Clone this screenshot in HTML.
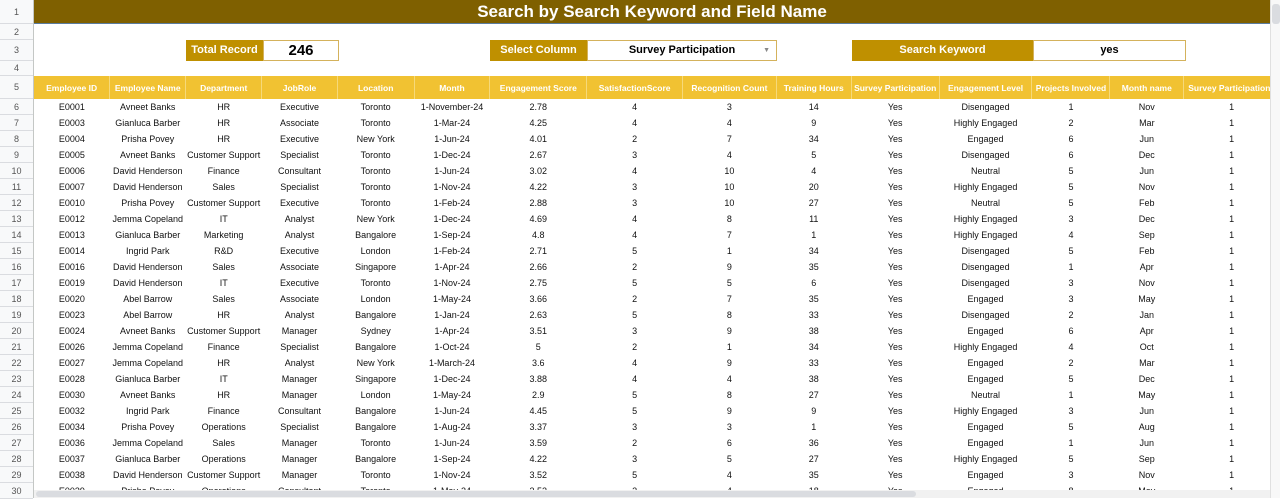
<!DOCTYPE html>
<html><head><meta charset="utf-8"><style>
body{margin:0;width:1280px;height:498px;overflow:hidden;background:#fff;font-family:"Liberation Sans",Arial,sans-serif;position:relative}
.rh{position:absolute;left:0;width:33px;border-right:1px solid #c4c7c5;background:#f8f9fa;color:#555;font-size:9px;text-align:center}
.rh div{border-bottom:1px solid #dadce0;box-sizing:border-box}
#title{position:absolute;left:34px;top:0;width:1236px;height:23px;background:#7f6000;border-bottom:1px solid #5a7ca0;color:#fff;font-weight:bold;font-size:17px;text-align:center;line-height:24px}
.lab{position:absolute;top:40px;height:21px;background:#bf9000;color:#fff;font-weight:bold;font-size:11px;text-align:center;line-height:21px}
.val{position:absolute;top:40px;height:19px;border:1px solid #d4b25c;background:#fff;color:#000;font-weight:bold;text-align:center;line-height:19px;box-sizing:content-box}
table{position:absolute;left:34px;top:76px;border-collapse:collapse;table-layout:fixed;font-size:9px}
td{height:16px;padding:0;text-align:center;white-space:nowrap;overflow:hidden;color:#111}
tr.h td{height:23px;background:#f1c232;color:#fff;font-weight:bold;font-size:8.5px;border-right:1px solid #f6d97a}
#sb{position:absolute;left:34px;top:490px;width:1236px;height:8px;background:#f1f1f1}
#sbt{position:absolute;left:36px;top:491px;width:880px;height:6px;background:#dadce0;border-radius:3px}
#vs{position:absolute;left:1270px;top:0;width:10px;height:498px;background:#f8f8f8;border-left:1px solid #e0e0e0}
</style></head><body>
<div class="rh" style="top:0;height:498px">
<div style="height:24px;line-height:24px">1</div><div style="height:16px;line-height:16px">2</div><div style="height:21px;line-height:21px">3</div><div style="height:15px;line-height:15px">4</div><div style="height:23px;line-height:23px">5</div>
<div style="height:16px;line-height:16px">6</div><div style="height:16px;line-height:16px">7</div><div style="height:16px;line-height:16px">8</div><div style="height:16px;line-height:16px">9</div><div style="height:16px;line-height:16px">10</div><div style="height:16px;line-height:16px">11</div><div style="height:16px;line-height:16px">12</div><div style="height:16px;line-height:16px">13</div><div style="height:16px;line-height:16px">14</div><div style="height:16px;line-height:16px">15</div><div style="height:16px;line-height:16px">16</div><div style="height:16px;line-height:16px">17</div><div style="height:16px;line-height:16px">18</div><div style="height:16px;line-height:16px">19</div><div style="height:16px;line-height:16px">20</div><div style="height:16px;line-height:16px">21</div><div style="height:16px;line-height:16px">22</div><div style="height:16px;line-height:16px">23</div><div style="height:16px;line-height:16px">24</div><div style="height:16px;line-height:16px">25</div><div style="height:16px;line-height:16px">26</div><div style="height:16px;line-height:16px">27</div><div style="height:16px;line-height:16px">28</div><div style="height:16px;line-height:16px">29</div><div style="height:16px;line-height:16px">30</div>
</div>
<div id="title">Search by Search Keyword and Field Name</div>
<div class="lab" style="left:186px;width:77px">Total Record</div>
<div class="val" style="left:263px;width:74px;font-size:15px">246</div>
<div class="lab" style="left:490px;width:97px">Select Column</div>
<div class="val" style="left:587px;width:188px;font-size:11px">Survey Participation<span style="position:absolute;right:6px;top:0;font-size:7px;color:#888">▼</span></div>
<div class="lab" style="left:852px;width:181px">Search Keyword</div>
<div class="val" style="left:1033px;width:151px;font-size:11px">yes</div>
<table>
<colgroup><col style="width:76px"><col style="width:76px"><col style="width:76px"><col style="width:76px"><col style="width:77px"><col style="width:76px"><col style="width:97px"><col style="width:96px"><col style="width:94px"><col style="width:75px"><col style="width:88px"><col style="width:93px"><col style="width:78px"><col style="width:74px"><col style="width:84px"></colgroup>
<tr class="h"><td>Employee ID</td><td>Employee Name</td><td>Department</td><td>JobRole</td><td>Location</td><td>Month</td><td>Engagement Score</td><td>SatisfactionScore</td><td>Recognition Count</td><td>Training Hours</td><td>Survey Participation</td><td>Engagement Level</td><td>Projects Involved</td><td>Month name</td><td style="text-align:left;padding-left:4px">Survey Participation C</td></tr>
<tr><td>E0001</td><td>Avneet Banks</td><td>HR</td><td>Executive</td><td>Toronto</td><td>1-November-24</td><td>2.78</td><td>4</td><td>3</td><td>14</td><td>Yes</td><td>Disengaged</td><td>1</td><td>Nov</td><td>1</td></tr>
<tr><td>E0003</td><td>Gianluca Barber</td><td>HR</td><td>Associate</td><td>Toronto</td><td>1-Mar-24</td><td>4.25</td><td>4</td><td>4</td><td>9</td><td>Yes</td><td>Highly Engaged</td><td>2</td><td>Mar</td><td>1</td></tr>
<tr><td>E0004</td><td>Prisha Povey</td><td>HR</td><td>Executive</td><td>New York</td><td>1-Jun-24</td><td>4.01</td><td>2</td><td>7</td><td>34</td><td>Yes</td><td>Engaged</td><td>6</td><td>Jun</td><td>1</td></tr>
<tr><td>E0005</td><td>Avneet Banks</td><td>Customer Support</td><td>Specialist</td><td>Toronto</td><td>1-Dec-24</td><td>2.67</td><td>3</td><td>4</td><td>5</td><td>Yes</td><td>Disengaged</td><td>6</td><td>Dec</td><td>1</td></tr>
<tr><td>E0006</td><td>David Henderson</td><td>Finance</td><td>Consultant</td><td>Toronto</td><td>1-Jun-24</td><td>3.02</td><td>4</td><td>10</td><td>4</td><td>Yes</td><td>Neutral</td><td>5</td><td>Jun</td><td>1</td></tr>
<tr><td>E0007</td><td>David Henderson</td><td>Sales</td><td>Specialist</td><td>Toronto</td><td>1-Nov-24</td><td>4.22</td><td>3</td><td>10</td><td>20</td><td>Yes</td><td>Highly Engaged</td><td>5</td><td>Nov</td><td>1</td></tr>
<tr><td>E0010</td><td>Prisha Povey</td><td>Customer Support</td><td>Executive</td><td>Toronto</td><td>1-Feb-24</td><td>2.88</td><td>3</td><td>10</td><td>27</td><td>Yes</td><td>Neutral</td><td>5</td><td>Feb</td><td>1</td></tr>
<tr><td>E0012</td><td>Jemma Copeland</td><td>IT</td><td>Analyst</td><td>New York</td><td>1-Dec-24</td><td>4.69</td><td>4</td><td>8</td><td>11</td><td>Yes</td><td>Highly Engaged</td><td>3</td><td>Dec</td><td>1</td></tr>
<tr><td>E0013</td><td>Gianluca Barber</td><td>Marketing</td><td>Analyst</td><td>Bangalore</td><td>1-Sep-24</td><td>4.8</td><td>4</td><td>7</td><td>1</td><td>Yes</td><td>Highly Engaged</td><td>4</td><td>Sep</td><td>1</td></tr>
<tr><td>E0014</td><td>Ingrid Park</td><td>R&amp;D</td><td>Executive</td><td>London</td><td>1-Feb-24</td><td>2.71</td><td>5</td><td>1</td><td>34</td><td>Yes</td><td>Disengaged</td><td>5</td><td>Feb</td><td>1</td></tr>
<tr><td>E0016</td><td>David Henderson</td><td>Sales</td><td>Associate</td><td>Singapore</td><td>1-Apr-24</td><td>2.66</td><td>2</td><td>9</td><td>35</td><td>Yes</td><td>Disengaged</td><td>1</td><td>Apr</td><td>1</td></tr>
<tr><td>E0019</td><td>David Henderson</td><td>IT</td><td>Executive</td><td>Toronto</td><td>1-Nov-24</td><td>2.75</td><td>5</td><td>5</td><td>6</td><td>Yes</td><td>Disengaged</td><td>3</td><td>Nov</td><td>1</td></tr>
<tr><td>E0020</td><td>Abel Barrow</td><td>Sales</td><td>Associate</td><td>London</td><td>1-May-24</td><td>3.66</td><td>2</td><td>7</td><td>35</td><td>Yes</td><td>Engaged</td><td>3</td><td>May</td><td>1</td></tr>
<tr><td>E0023</td><td>Abel Barrow</td><td>HR</td><td>Analyst</td><td>Bangalore</td><td>1-Jan-24</td><td>2.63</td><td>5</td><td>8</td><td>33</td><td>Yes</td><td>Disengaged</td><td>2</td><td>Jan</td><td>1</td></tr>
<tr><td>E0024</td><td>Avneet Banks</td><td>Customer Support</td><td>Manager</td><td>Sydney</td><td>1-Apr-24</td><td>3.51</td><td>3</td><td>9</td><td>38</td><td>Yes</td><td>Engaged</td><td>6</td><td>Apr</td><td>1</td></tr>
<tr><td>E0026</td><td>Jemma Copeland</td><td>Finance</td><td>Specialist</td><td>Bangalore</td><td>1-Oct-24</td><td>5</td><td>2</td><td>1</td><td>34</td><td>Yes</td><td>Highly Engaged</td><td>4</td><td>Oct</td><td>1</td></tr>
<tr><td>E0027</td><td>Jemma Copeland</td><td>HR</td><td>Analyst</td><td>New York</td><td>1-March-24</td><td>3.6</td><td>4</td><td>9</td><td>33</td><td>Yes</td><td>Engaged</td><td>2</td><td>Mar</td><td>1</td></tr>
<tr><td>E0028</td><td>Gianluca Barber</td><td>IT</td><td>Manager</td><td>Singapore</td><td>1-Dec-24</td><td>3.88</td><td>4</td><td>4</td><td>38</td><td>Yes</td><td>Engaged</td><td>5</td><td>Dec</td><td>1</td></tr>
<tr><td>E0030</td><td>Avneet Banks</td><td>HR</td><td>Manager</td><td>London</td><td>1-May-24</td><td>2.9</td><td>5</td><td>8</td><td>27</td><td>Yes</td><td>Neutral</td><td>1</td><td>May</td><td>1</td></tr>
<tr><td>E0032</td><td>Ingrid Park</td><td>Finance</td><td>Consultant</td><td>Bangalore</td><td>1-Jun-24</td><td>4.45</td><td>5</td><td>9</td><td>9</td><td>Yes</td><td>Highly Engaged</td><td>3</td><td>Jun</td><td>1</td></tr>
<tr><td>E0034</td><td>Prisha Povey</td><td>Operations</td><td>Specialist</td><td>Bangalore</td><td>1-Aug-24</td><td>3.37</td><td>3</td><td>3</td><td>1</td><td>Yes</td><td>Engaged</td><td>5</td><td>Aug</td><td>1</td></tr>
<tr><td>E0036</td><td>Jemma Copeland</td><td>Sales</td><td>Manager</td><td>Toronto</td><td>1-Jun-24</td><td>3.59</td><td>2</td><td>6</td><td>36</td><td>Yes</td><td>Engaged</td><td>1</td><td>Jun</td><td>1</td></tr>
<tr><td>E0037</td><td>Gianluca Barber</td><td>Operations</td><td>Manager</td><td>Bangalore</td><td>1-Sep-24</td><td>4.22</td><td>3</td><td>5</td><td>27</td><td>Yes</td><td>Highly Engaged</td><td>5</td><td>Sep</td><td>1</td></tr>
<tr><td>E0038</td><td>David Henderson</td><td>Customer Support</td><td>Manager</td><td>Toronto</td><td>1-Nov-24</td><td>3.52</td><td>5</td><td>4</td><td>35</td><td>Yes</td><td>Engaged</td><td>3</td><td>Nov</td><td>1</td></tr>
<tr><td>E0039</td><td>Prisha Povey</td><td>Operations</td><td>Consultant</td><td>Toronto</td><td>1-May-24</td><td>3.52</td><td>2</td><td>4</td><td>18</td><td>Yes</td><td>Engaged</td><td>8</td><td>May</td><td>1</td></tr>
</table>
<div id="sb"></div><div id="sbt"></div>
<div id="vs"><div style="margin:4px 1px;height:20px;background:#dadce0;border-radius:3px"></div></div>
</body></html>
